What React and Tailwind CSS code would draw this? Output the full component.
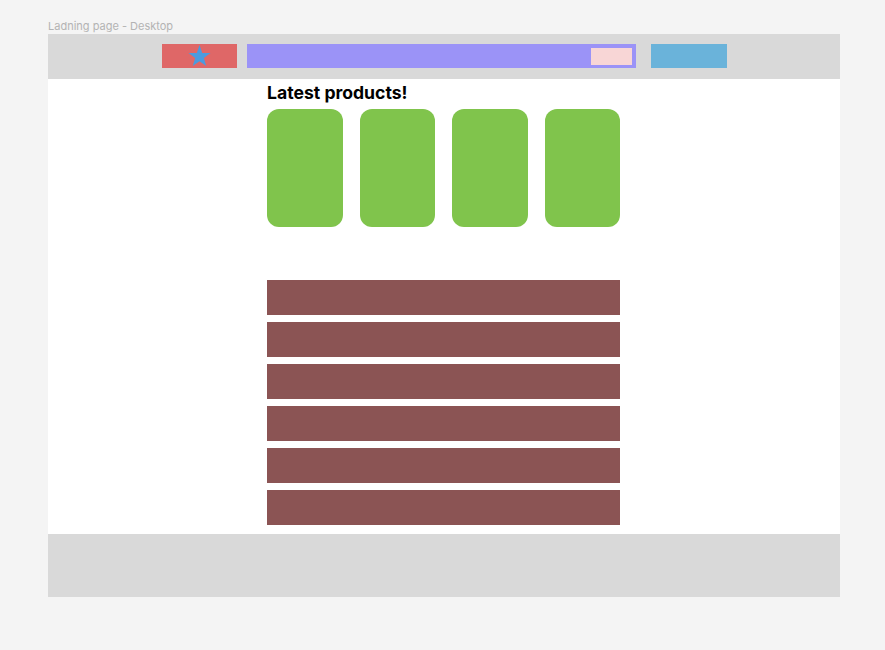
export default function App() {
  const font = { fontFamily: "Inter, 'Noto Sans', sans-serif" };
  return (
    <div className="w-[885px] h-[650px] bg-[#f4f4f4] pl-[48px] pt-[18px]" style={font}>
      <div className="h-[16px] text-[11px] leading-[16px] text-[#b3b3b3]">Ladning page - Desktop</div>
      <div className="w-[792px]">
        <div className="h-[45px] bg-[#d9d9d9] flex items-start pt-[10px] pl-[114px]">
          <div className="w-[75px] h-[24px] bg-[#df6767] flex items-center justify-center">
            <svg width="23" height="22" viewBox="0 0 24 23">
              <polygon
                fill="#4a9be0"
                points="12,0 14.8,8.3 23.5,8.3 16.5,13.6 19.1,22 12,16.9 4.9,22 7.5,13.6 0.5,8.3 9.2,8.3"
              />
            </svg>
          </div>
          <div className="ml-[10px] w-[389px] h-[24px] bg-[#9b93f7] flex items-center justify-end pr-[4px]">
            <div className="w-[41px] h-[17px] bg-[#f8d6d6]" />
          </div>
          <div className="ml-[15px] w-[76px] h-[24px] bg-[#6ab3da]" />
        </div>
        <div className="h-[455px] bg-white pl-[219px] pt-[2px]">
          <div className="h-[24px] text-[17.6px] leading-[24px] font-bold text-black">Latest products!</div>
          <div className="mt-[3.5px] w-[353px] grid grid-cols-4 gap-[17px]">
            <div className="h-[118.5px] rounded-[12px] bg-[#80c44c]" />
            <div className="h-[118.5px] rounded-[12px] bg-[#80c44c]" />
            <div className="h-[118.5px] rounded-[12px] bg-[#80c44c]" />
            <div className="h-[118.5px] rounded-[12px] bg-[#80c44c]" />
          </div>
          <div className="mt-[53px] w-[353px] flex flex-col gap-[7px]">
            <div className="h-[35px] bg-[#8b5454]" />
            <div className="h-[35px] bg-[#8b5454]" />
            <div className="h-[35px] bg-[#8b5454]" />
            <div className="h-[35px] bg-[#8b5454]" />
            <div className="h-[35px] bg-[#8b5454]" />
            <div className="h-[35px] bg-[#8b5454]" />
          </div>
        </div>
        <div className="h-[63px] bg-[#d9d9d9]" />
      </div>
    </div>
  );
}
